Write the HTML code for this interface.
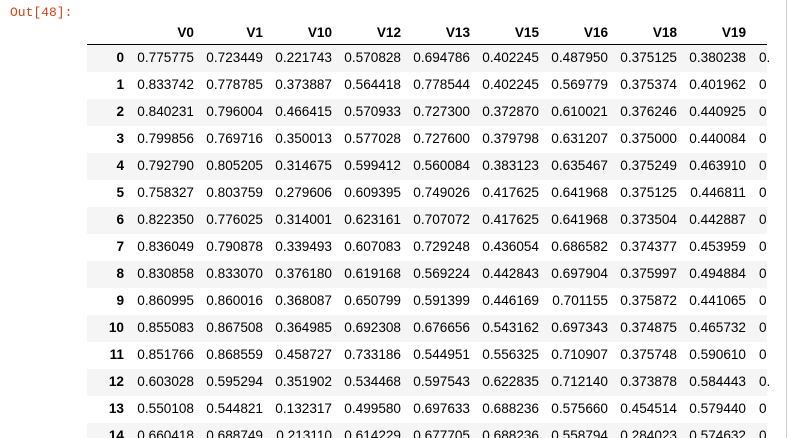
<!DOCTYPE html><html><head><style>
body{margin:0;width:789px;height:438px;overflow:hidden;background:#fff;font-family:"Liberation Sans",Arial,sans-serif;position:relative}
.out{position:absolute;left:10px;top:5px;color:#d84315;font-family:"Liberation Mono",monospace;font-size:13px}
.wrap{position:absolute;left:87px;top:0;width:682px;height:438px;overflow:hidden}
.vl{position:absolute;left:786px;top:0;width:1px;height:438px;background:#cfcfcf}
.r{position:absolute;left:0;width:680px;height:27px;font-size:13.6px;color:#000}
.r span{position:absolute;top:5px;text-align:right;width:70px}
.g{background:#f5f5f5}
.h{font-weight:bold;border-bottom:1.5px solid #000;height:20px;top:24px}
.h span{top:1px}
.i{font-weight:bold}
</style></head><body>
<div class="out">Out[48]:</div>
<div class="vl"></div>
<div class="wrap" id="w"></div>
<script>
var cols=["V0","V1","V10","V12","V13","V15","V16","V18","V19"];
var d=[
"0.775775 0.723449 0.221743 0.570828 0.694786 0.402245 0.487950 0.375125 0.380238 0.",
"0.833742 0.778785 0.373887 0.564418 0.778544 0.402245 0.569779 0.375374 0.401962 0",
"0.840231 0.796004 0.466415 0.570933 0.727300 0.372870 0.610021 0.376246 0.440925 0",
"0.799856 0.769716 0.350013 0.577028 0.727600 0.379798 0.631207 0.375000 0.440084 0",
"0.792790 0.805205 0.314675 0.599412 0.560084 0.383123 0.635467 0.375249 0.463910 0",
"0.758327 0.803759 0.279606 0.609395 0.749026 0.417625 0.641968 0.375125 0.446811 0",
"0.822350 0.776025 0.314001 0.623161 0.707072 0.417625 0.641968 0.373504 0.442887 0",
"0.836049 0.790878 0.339493 0.607083 0.729248 0.436054 0.686582 0.374377 0.453959 0",
"0.830858 0.833070 0.376180 0.619168 0.569224 0.442843 0.697904 0.375997 0.494884 0",
"0.860995 0.860016 0.368087 0.650799 0.591399 0.446169 0.701155 0.375872 0.441065 0",
"0.855083 0.867508 0.364985 0.692308 0.676656 0.543162 0.697343 0.374875 0.465732 0",
"0.851766 0.868559 0.458727 0.733186 0.544951 0.556325 0.710907 0.375748 0.590610 0",
"0.603028 0.595294 0.351902 0.534468 0.597543 0.622835 0.712140 0.373878 0.584443 0.",
"0.550108 0.544821 0.132317 0.499580 0.697633 0.688236 0.575660 0.454514 0.579440 0",
"0.660418 0.688749 0.213110 0.614229 0.677705 0.688236 0.558794 0.284023 0.574632 0"];
var rights=[37,107,176,245,314,383,452,521,590,659];
var h='<div class="r h">';
cols.forEach(function(c,j){h+='<span style="left:'+(rights[j+1]-70)+'px">'+c+'</span>'});
h+='</div>';
d.forEach(function(row,i){
 var v=row.split(' ');
 h+='<div class="r'+(i%2==0?' g':'')+'" style="top:'+(45+i*27)+'px"><span class="i" style="left:'+(rights[0]-70)+'px">'+i+'</span>';
 v.forEach(function(x,j){var l=rights[j+1]-70;if(j==9){h+='<span style="left:672px;text-align:left">'+x+'</span>'}else h+='<span style="left:'+l+'px">'+x+'</span>'});
 h+='</div>';
});
document.getElementById('w').innerHTML=h;
</script>
</body></html>
